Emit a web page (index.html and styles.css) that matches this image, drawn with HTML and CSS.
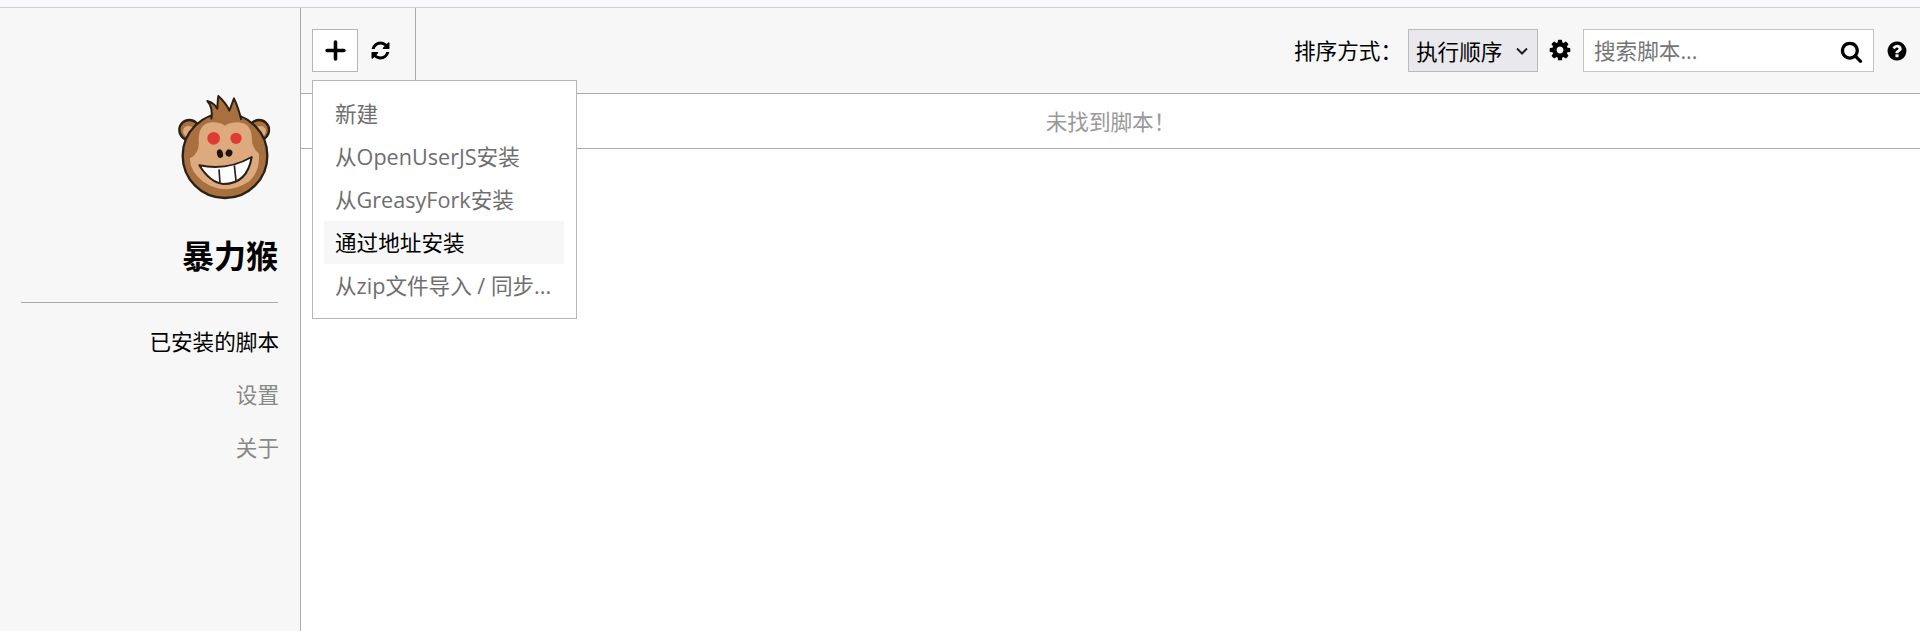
FILE: index.html
```html
<!DOCTYPE html>
<html lang="zh-CN">
  <head>
    <title>暴力猴</title>
    <meta charset="UTF-8" />
    <link rel="stylesheet" href="styles.css">
  </head>
  <body>
    <div class="top-strip"></div>
    <div class="app">
      <aside class="sidebar">
        <svg class="sidebar__logo" viewBox="0 0 330 345">
          <circle cx="58" cy="120" r="30" fill="#a8703f" stroke="#2b2018" stroke-width="7"/>
          <circle cx="267" cy="120" r="30" fill="#a8703f" stroke="#2b2018" stroke-width="7"/>
          <circle cx="56" cy="124" r="17" fill="#dcaa7d"/>
          <circle cx="271" cy="124" r="17" fill="#dcaa7d"/>
          <ellipse cx="165" cy="197" rx="127" ry="127" fill="#a8703f" stroke="#2b2018" stroke-width="7"/>
          <path d="M124 88 C128 65 125 47 112 33 C125 37 135 43 142 56 C143 42 143 30 145 18 C158 30 170 42 178 62 C183 50 187 38 192 25 C200 42 208 65 214 90" fill="#a8703f" stroke="#2b2018" stroke-width="6" stroke-linejoin="round"/>
          <path d="M86 150 Q86 97 130 97 Q150 97 165 107 Q180 97 205 97 Q246 99 246 150 Q246 172 266 190 Q272 240 238 274 Q165 322 98 274 Q58 240 60 205 Q90 190 86 150 Z" fill="#dcaa7d"/>
          <circle cx="131" cy="145" r="19" fill="#e03a35"/>
          <circle cx="198" cy="145" r="17" fill="#e03a35"/>
          <ellipse cx="150" cy="191" rx="9" ry="13" fill="#1c1410" transform="rotate(-15 150 191)"/>
          <ellipse cx="177" cy="189" rx="10" ry="11" fill="#1c1410" transform="rotate(25 177 189)"/>
          <path d="M88 226 Q170 244 245 201 Q232 282 160 282 Q120 278 88 226 Z" fill="#fff" stroke="#2b2018" stroke-width="6" stroke-linejoin="round"/>
          <path d="M147 238 L150 279 M193 226 L198 272" stroke="#2b2018" stroke-width="5" fill="none"/>
        </svg>
        <h1 class="sidebar__title">暴力猴</h1>
        <nav class="sidebar__nav">
          <a class="sidebar__link sidebar__link--active">已安装的脚本</a>
          <a class="sidebar__link">设置</a>
          <a class="sidebar__link">关于</a>
        </nav>
      </aside>
      <main class="main">
        <div class="toolbar">
          <div class="toolbar__left">
            <div class="add-wrap">
              <button class="add-btn">
                <svg class="icon-plus" viewBox="0 0 20 20"><path d="M10 2v16M2 10h16" stroke="#000" stroke-width="3.4" stroke-linecap="round" fill="none"/></svg>
              </button>
              <div class="menu">
                <div class="menu__item">新建</div>
                <div class="menu__item">从OpenUserJS安装</div>
                <div class="menu__item">从GreasyFork安装</div>
                <div class="menu__item menu__item--hover">通过地址安装</div>
                <div class="menu__item">从zip文件导入 / 同步...</div>
              </div>
            </div>
            <svg class="icon icon--refresh" viewBox="0 0 1792 1792"><path d="M1639 1056q0 5-1 7-64 268-268 434.500t-478 166.500q-146 0-282.500-55t-243.500-157l-129 129q-19 19-45 19t-45-19-19-45v-448q0-26 19-45t45-19h448q26 0 45 19t19 45-19 45l-137 137q71 66 161 102t187 36q134 0 250-65t186-179q11-17 53-117 8-23 30-23h192q13 0 22.500 9.500t9.500 22.500zm25-800v448q0 26-19 45t-45 19h-448q-26 0-45-19t-19-45 19-45l138-138q-148-137-349-137-134 0-250 65t-186 179q-11 17-53 117-8 23-30 23h-199q-13 0-22.500-9.500t-9.500-22.500v-7q65-268 270-434.500t480-166.500q146 0 284 55.500t245 156.500l130-129q19-19 45-19t45 19 19 45z"/></svg>
          </div>
          <div class="toolbar__right">
            <span class="sort-label">排序方式：</span>
            <div class="sort-select">
              <span>执行顺序</span>
              <svg class="sort-select__arrow" viewBox="0 0 12 8"><path d="M1 1.500l5 5 5-5" stroke="#222" stroke-width="2" fill="none"/></svg>
            </div>
            <svg class="icon icon--cog" viewBox="0 0 1792 1792"><path d="M1152 896q0-106-75-181t-181-75-181 75-75 181 75 181 181 75 181-75 75-181zm512-109v222q0 12-8 23t-20 13l-185 28q-19 54-39 91 35 50 107 138 10 12 10 25t-9 23q-27 37-99 108t-94 71q-12 0-26-9l-138-108q-44 23-91 38-16 136-29 186-7 28-36 28h-222q-14 0-24.500-8.500t-11.500-21.500l-28-184q-49-16-90-37l-141 107q-10 9-25 9-14 0-25-11-126-114-165-168-7-10-7-23 0-12 8-23 15-21 51-66.500t54-70.500q-27-50-41-99l-183-27q-13-2-21-12.500t-8-23.500v-222q0-12 8-23t19-13l186-28q14-46 39-92-40-57-107-138-10-12-10-24 0-10 9-23 26-36 98.500-107.500t94.500-71.500q13 0 26 10l138 107q44-23 91-38 16-136 29-186 7-28 36-28h222q14 0 24.500 8.500t11.500 21.500l28 184q49 16 90 37l142-107q9-9 24-9 13 0 25 10 129 119 165 170 7 8 7 22 0 12-8 23-15 21-51 66.500t-54 70.500q26 50 41 98l183 28q13 2 21 12.500t8 23.500z"/></svg>
            <div class="search">
              <input class="search__input" type="text" placeholder="搜索脚本...">
              <svg class="icon icon--search" viewBox="0 0 1792 1792"><path d="M1216 832q0-185-131.500-316.500t-316.500-131.500-316.500 131.500-131.500 316.500 131.500 316.500 316.500 131.500 316.500-131.500 131.500-316.500zm512 832q0 52-38 90t-90 38q-54 0-90-38l-343-342q-179 124-399 124-143 0-273.500-55.500t-225-150-150-225-55.500-273.500 55.500-273.500 150-225 225-150 273.500-55.500 273.500 55.500 225 150 150 225 55.500 273.500q0 220-124 399l343 343q37 37 37 90z"/></svg>
            </div>
            <svg class="icon icon--help" viewBox="0 0 1792 1792"><path d="M1024 1376v-192q0-14-9-23t-23-9h-192q-14 0-23 9t-9 23v192q0 14 9 23t23 9h192q14 0 23-9t9-23zm256-672q0-88-55.500-163t-138.500-116-170-41q-243 0-371 213-15 24 8 42l132 100q7 6 19 6 16 0 25-12 53-68 86-92 34-24 86-24 48 0 85.500 26t37.500 59q0 38-20 61t-68 45q-63 28-115.500 86.500t-52.500 125.500v36q0 14 9 23t23 9h192q14 0 23-9t9-23q0-19 21.500-49.500t54.500-49.500q32-18 49-28.500t46-35 44.500-48 28-60.500 12.500-81zm384 192q0 209-103 385.500t-279.500 279.500-385.500 103-385.500-103-279.500-279.500-103-385.500 103-385.500 279.500-279.500 385.500-103 385.500 103 279.500 279.500 103 385.500z"/></svg>
          </div>
        </div>
        <div class="empty">未找到脚本！</div>
      </main>
    </div>
  </body>
</html>
```

FILE: styles.css
```css
html, body {
  margin: 0;
  height: 100%;
}

body {
  display: flex;
  flex-direction: column;
  overflow: hidden;
  font-family: 'Open Sans', 'Noto Sans CJK SC', sans-serif;
  font-size: 21.6px;
  color: #000;
  background: #ffffff;
}

.top-strip {
  flex: none;
  height: 7px;
  background: #f9f9fb;
  border-bottom: 1px solid #cfcfcf;
}

.app {
  display: flex;
  flex: 1;
  min-height: 0;
}

.sidebar {
  display: flex;
  flex: none;
  flex-direction: column;
  align-items: flex-end;
  box-sizing: border-box;
  width: 301px;
  padding: 82px 22px 0 21px;
  background: #f7f7f7;
  border-right: 1px solid #aaaaaa;
}

.sidebar__logo {
  width: 110px;
  height: 115px;
  margin-right: -2px;
}

.sidebar__title {
  width: 100%;
  margin: 29px 0 0;
  padding-bottom: 24px;
  font-size: 32px;
  font-weight: 700;
  line-height: 44px;
  text-align: right;
  border-bottom: 1px solid #aaaaaa;
}

.sidebar__nav {
  display: flex;
  flex-direction: column;
  align-items: flex-end;
  margin: 17px -1px 0 0;
}

.sidebar__link {
  height: 53px;
  line-height: 44px;
  color: #888888;
}

.sidebar__link--active {
  color: #000;
}

.main {
  flex: 1;
  min-width: 0;
}

.toolbar {
  display: flex;
  justify-content: space-between;
  box-sizing: border-box;
  height: 86px;
  background: #f7f7f7;
  border-bottom: 1px solid #aaaaaa;
}

.toolbar__left {
  display: flex;
  align-items: flex-start;
  box-sizing: border-box;
  width: 115px;
  height: 85px;
  padding: 21px 0 0 11px;
  border-right: 1px solid #aaaaaa;
}

.toolbar__right {
  display: flex;
  align-items: flex-start;
  padding: 21px 12px 0 0;
}

.add-wrap {
  position: relative;
}

.add-btn {
  display: flex;
  align-items: center;
  justify-content: center;
  box-sizing: border-box;
  width: 46px;
  height: 43px;
  padding: 0;
  background: #ffffff;
  border: 1px solid #b5b5b5;
}

.icon-plus {
  width: 21px;
  height: 21px;
}

.menu {
  position: absolute;
  top: 51px;
  left: 0;
  z-index: 2;
  box-sizing: border-box;
  width: 265px;
  height: 239px;
  padding: 11px 12px 0 11px;
  background: #ffffff;
  border: 1px solid #b5b5b5;
}

.menu__item {
  height: 43px;
  padding: 0 11px;
  line-height: 43px;
  color: #6e6e6e;
  white-space: nowrap;
}

.menu__item--hover {
  color: #000;
  background: #f7f7f7;
}

.icon--refresh {
  width: 21px;
  height: 21px;
  margin: 11px 0 0 12px;
}

.sort-label {
  height: 43px;
  margin-right: 6px;
  line-height: 43px;
}

.sort-select {
  display: flex;
  align-items: center;
  justify-content: space-between;
  box-sizing: border-box;
  width: 130px;
  height: 43px;
  padding: 0 9px 0 7px;
  background: #e9e9ed;
  border: 1px solid #bbbbbb;
}

.sort-select__arrow {
  width: 12px;
  height: 8px;
}

.icon--cog {
  width: 24px;
  height: 24px;
  margin: 9px 11px 0 10px;
}

.search {
  position: relative;
  width: 291px;
  height: 43px;
}

.search__input {
  box-sizing: border-box;
  width: 100%;
  height: 100%;
  padding: 0 40px 0 10px;
  font-family: inherit;
  font-size: 21.6px;
  background: #ffffff;
  border: 1px solid #c4c4c4;
  outline: none;
}

.search__input::placeholder {
  color: #757575;
}

.icon--search {
  position: absolute;
  top: 11px;
  right: 11px;
  width: 23px;
  height: 23px;
}

.icon--help {
  width: 22px;
  height: 22px;
  margin: 11px 0 0 12px;
}

.empty {
  height: 54px;
  line-height: 56px;
  text-align: center;
  color: #999999;
  border-bottom: 1px solid #aaaaaa;
}
```
